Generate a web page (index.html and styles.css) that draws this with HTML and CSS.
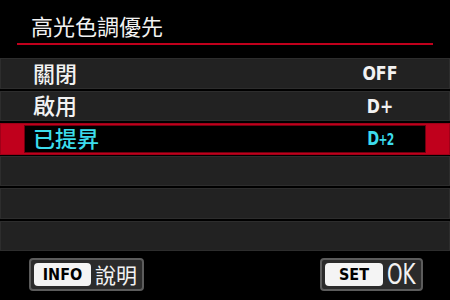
FILE: index.html
```html
<!DOCTYPE html>
<html lang="zh-Hant">
<head>
  <meta charset="UTF-8" />
  <title>高光色調優先</title>
  <link rel="stylesheet" href="styles.css">
</head>
<body>

  <div class="screen">
    <div class="menu-head">
      <div class="menu-title">高光色調優先</div>
    </div>

    <div class="options">
      <div class="row">
        <div class="row-inner">
          <span class="label">關閉</span>
          <span class="value"><span class="glyphs">OFF</span></span>
        </div>
      </div>
      <div class="row">
        <div class="row-inner">
          <span class="label">啟用</span>
          <span class="value"><span class="glyphs">D+</span></span>
        </div>
      </div>
      <div class="row selected">
        <div class="row-inner">
          <span class="label">已提昇</span>
          <span class="value"><span class="glyphs">D<span class="small">+2</span></span></span>
        </div>
      </div>
      <div class="row"></div>
      <div class="row"></div>
      <div class="row"></div>
    </div>

    <div class="footer">
      <div class="key-btn">
        <span class="key">INFO</span>
        <span class="key-label">說明</span>
      </div>
      <div class="key-btn">
        <span class="key set">SET</span>
        <span class="key-label ok">OK</span>
      </div>
    </div>
  </div>

</body>
</html>
```

FILE: styles.css
```css
body {
  margin: 0;
  background-color: #000;
  font-family: "Noto Sans CJK TC", "Noto Sans", sans-serif;
}

.screen {
  width: 450px;
  height: 300px;
  display: flex;
  flex-direction: column;
  background-color: #000;
  overflow: hidden;
}

.menu-head {
  height: 58px;
  padding: 0 17px;
}

.menu-title {
  height: 45px;
  padding-left: 14px;
  padding-bottom: 7px;
  border-bottom: 2px solid #c0001c;
  box-sizing: border-box;
  display: flex;
  align-items: flex-end;
  color: #f2f2f2;
  font-size: 22px;
  line-height: 22px;
}

.options {
  display: grid;
  grid-template-rows: repeat(6, 30.5px);
  gap: 2px;
}

.row {
  background-color: #222;
  border: 1px solid #2d2d2d;
  padding: 1px 23px;
  display: flex;
}

.row-inner {
  flex: 1;
  display: flex;
  align-items: center;
  justify-content: space-between;
  padding-left: 8px;
  border: 1px solid transparent;
}

.row.selected {
  background-color: #c0001c;
  border-color: #a00018;
  margin-bottom: -1px;
}

.row.selected .row-inner {
  background-color: #000;
  border-color: #70000f;
}

.label {
  color: #f2f2f2;
  font-size: 22px;
  font-weight: 500;
  line-height: 22px;
  padding-bottom: 3px;
}

.value {
  width: 80px;
  margin-right: 5px;
  text-align: center;
  color: #f2f2f2;
  font-family: "DejaVu Sans Condensed", "DejaVu Sans", sans-serif;
  font-weight: bold;
  font-size: 20px;
  line-height: 22px;
}

.glyphs {
  display: inline-block;
  transform: scaleX(0.88);
}

.selected .label,
.selected .value {
  color: #3cdcec;
}

.selected .glyphs {
  letter-spacing: -1px;
  transform: scaleX(0.8);
}

.small {
  font-size: 15px;
}

.footer {
  flex: 1;
  display: flex;
  justify-content: space-between;
  align-items: flex-start;
  padding: 7px 27px 0 29px;
}

.key-btn {
  display: flex;
  align-items: center;
  gap: 4px;
  height: 33px;
  box-sizing: border-box;
  padding: 0 3px;
  border: 2px solid #5c5c5c;
  border-radius: 4px;
  background-color: #2b2b2b;
}

.key {
  width: 57px;
  height: 23px;
  border-radius: 4px;
  background-color: #f4f4f4;
  color: #000;
  font-family: "DejaVu Sans Condensed", "DejaVu Sans", sans-serif;
  font-weight: bold;
  font-size: 16px;
  line-height: 23px;
  text-align: center;
}

.key.set {
  width: 58px;
}

.key-label {
  color: #f2f2f2;
  font-size: 21px;
  line-height: 25px;
  padding-right: 2px;
}

.ok {
  font-family: "DejaVu Sans Condensed", "DejaVu Sans", sans-serif;
  font-size: 29px;
  line-height: 29px;
  display: inline-block;
  width: 28px;
  transform: scaleX(0.76);
  transform-origin: left center;
  padding-right: 3px;
}
```
